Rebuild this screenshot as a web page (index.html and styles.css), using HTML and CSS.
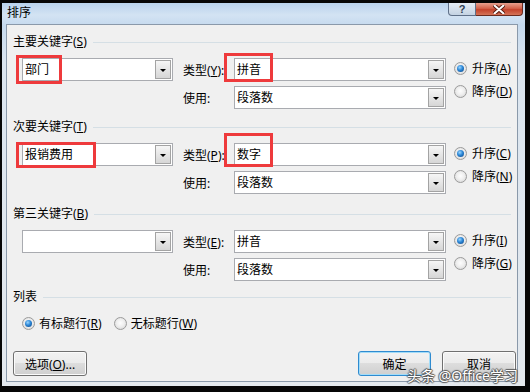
FILE: index.html
```html
<!DOCTYPE html>
<html lang="zh-CN">
<head>
    <meta charset="UTF-8">
    <meta name="viewport" content="width=device-width, initial-scale=1.0">
    <title>排序</title>
    <link rel="stylesheet" href="styles.css">
</head>
<body>
    <div class="window">
        <div class="titlebar">
            <span class="title">排序</span>
            <div class="caption">
                <span class="cap-btn help">?</span>
                <span class="cap-btn close">
                    <svg width="12" height="9" viewBox="0 0 12 9">
                        <path d="M1.5 0.5 L10.5 8.5 M10.5 0.5 L1.5 8.5" stroke="#5a1b10" stroke-width="4" stroke-linecap="round"/>
                        <path d="M1.5 0.5 L10.5 8.5 M10.5 0.5 L1.5 8.5" stroke="#fff" stroke-width="2" stroke-linecap="round"/>
                    </svg>
                </span>
            </div>
        </div>

        <div class="client">
            <!-- 主要关键字 -->
            <div class="group">
                <div class="group-head"><span>主要关键字(<u>S</u>)</span></div>
                <div class="group-body">
                    <div class="combo key">
                        <span class="value">部门</span><span class="drop"></span>
                        <span class="mark mark-1"></span>
                    </div>
                    <div class="fields">
                        <div class="field">
                            <label>类型(<u>Y</u>):</label>
                            <div class="combo wide">
                                <span class="value">拼音</span><span class="drop"></span>
                                <span class="mark mark-2"></span>
                            </div>
                        </div>
                        <div class="field">
                            <label>使用:</label>
                            <div class="combo wide"><span class="value">段落数</span><span class="drop"></span></div>
                        </div>
                    </div>
                    <div class="order">
                        <span class="radio on"><i></i>升序(<u>A</u>)</span>
                        <span class="radio"><i></i>降序(<u>D</u>)</span>
                    </div>
                </div>
            </div>

            <!-- 次要关键字 -->
            <div class="group">
                <div class="group-head"><span>次要关键字(<u>T</u>)</span></div>
                <div class="group-body">
                    <div class="combo key">
                        <span class="value">报销费用</span><span class="drop"></span>
                        <span class="mark mark-3"></span>
                    </div>
                    <div class="fields">
                        <div class="field">
                            <label>类型(<u>P</u>):</label>
                            <div class="combo wide">
                                <span class="value">数字</span><span class="drop"></span>
                                <span class="mark mark-4"></span>
                            </div>
                        </div>
                        <div class="field">
                            <label>使用:</label>
                            <div class="combo wide"><span class="value">段落数</span><span class="drop"></span></div>
                        </div>
                    </div>
                    <div class="order">
                        <span class="radio on"><i></i>升序(<u>C</u>)</span>
                        <span class="radio"><i></i>降序(<u>N</u>)</span>
                    </div>
                </div>
            </div>

            <!-- 第三关键字 -->
            <div class="group third">
                <div class="group-head"><span>第三关键字(<u>B</u>)</span></div>
                <div class="group-body">
                    <div class="combo key"><span class="value"></span><span class="drop"></span></div>
                    <div class="fields">
                        <div class="field">
                            <label>类型(<u>E</u>):</label>
                            <div class="combo wide"><span class="value">拼音</span><span class="drop"></span></div>
                        </div>
                        <div class="field">
                            <label>使用:</label>
                            <div class="combo wide"><span class="value">段落数</span><span class="drop"></span></div>
                        </div>
                    </div>
                    <div class="order">
                        <span class="radio on"><i></i>升序(<u>I</u>)</span>
                        <span class="radio"><i></i>降序(<u>G</u>)</span>
                    </div>
                </div>
            </div>

            <!-- 列表 -->
            <div class="group list">
                <div class="group-head"><span>列表</span></div>
                <div class="list-body">
                    <span class="radio on"><i></i>有标题行(<u>R</u>)</span>
                    <span class="radio"><i></i>无标题行(<u>W</u>)</span>
                </div>
            </div>

            <div class="buttons">
                <button class="btn">选项(<u>O</u>)...</button>
                <button class="btn ok">确定</button>
                <button class="btn cancel">取消</button>
            </div>
        </div>

        <span class="watermark">头条 @Office学习</span>
    </div>
</body>
</html>
```

FILE: styles.css
```css
* { margin: 0; padding: 0; box-sizing: border-box; }

body {
    width: 530px;
    height: 392px;
    padding: 3px 5px 6px 2px;
    background: #060606;
    font-family: "Noto Sans", "Noto Sans CJK SC", sans-serif;
    font-size: 12px;
    color: #000;
}

.window {
    position: relative;
    height: 383px;
    display: flex;
    flex-direction: column;
    background: linear-gradient(180deg, #b9d2ec 0, #d3e3f3 12px, #c6daee 22px, #dbe5ef 60px, #e4e9ee 100%);
}

/* title bar */
.titlebar {
    height: 21px;
    display: flex;
    align-items: flex-start;
    padding-left: 5px;
}

.title { line-height: 20px; }

.caption {
    margin-left: auto;
    margin-right: 2px;
    display: flex;
}

.cap-btn {
    height: 13px;
    display: flex;
    align-items: center;
    justify-content: center;
}

.help {
    width: 28px;
    border: 1px solid #5f7088;
    border-top: none;
    border-radius: 0 0 0 4px;
    background: linear-gradient(#e6edf5, #c4d3e3);
    color: #2e3d52;
    font-family: "Liberation Sans", sans-serif;
    font-weight: bold;
    font-size: 11px;
    line-height: 12px;
}

.close {
    width: 47px;
    border: 1px solid #6a2b1f;
    border-top: none;
    border-left: none;
    border-radius: 0 0 4px 0;
    background: linear-gradient(#e6a08e 0, #d2614a 45%, #c4432c 55%, #d47458 100%);
}

/* client area */
.client {
    flex: 1;
    margin: 0 7px 4px 4px;
    padding-top: 9px;
    border: 1px solid #8a99aa;
    background: #f0f0f0;
    display: flex;
    flex-direction: column;
}

.group + .group { margin-top: 10px; }
.group.third { margin-top: 12px; }
.group.list { margin-top: 8px; }

.group-head {
    display: flex;
    align-items: center;
    height: 16px;
    line-height: 16px;
    padding: 0 6px;
}

.group-head::after {
    content: "";
    flex: 1;
    margin-left: 6px;
    border-top: 1px solid #d5dfe5;
}

.group-body {
    display: flex;
    align-items: flex-start;
    margin-top: 8px;
    padding-left: 15px;
}

/* combo box */
.combo {
    position: relative;
    display: flex;
    height: 23px;
    padding: 1px;
    border: 1px solid #a9abb0;
    background: #fff;
}

.combo.key { width: 151px; }
.combo.wide { width: 212px; }

.value {
    flex: 1;
    padding-left: 1px;
    line-height: 19px;
}

.drop {
    width: 16px;
    border: 1px solid #a3a3a3;
    background: linear-gradient(#f6f6f6, #d6d6d6);
    display: flex;
    align-items: center;
    justify-content: center;
}

.drop::after {
    content: "";
    margin-top: 1px;
    border-top: 3px solid #000;
    border-left: 3px solid transparent;
    border-right: 3px solid transparent;
}

/* red highlight marks */
.mark {
    position: absolute;
    border: 3px solid #ee3a3c;
}

.mark-1 { left: -7px; top: -4px; width: 46px; height: 29px; }
.mark-2 { left: -11px; top: -6px; width: 49px; height: 29px; }
.mark-3 { left: -7px; top: -2px; width: 80px; height: 26px; }
.mark-4 { left: -11px; top: -11px; width: 49px; height: 34px; }

.fields {
    margin-left: 10px;
    display: flex;
    flex-direction: column;
    gap: 5px;
}

.field {
    display: flex;
    align-items: center;
}

.field label { width: 51px; }

/* radios */
.order {
    margin-left: 8px;
    display: flex;
    flex-direction: column;
    gap: 3px;
}

.radio {
    display: flex;
    align-items: center;
    height: 20px;
}

.radio i {
    width: 13px;
    height: 13px;
    margin-right: 5px;
    border: 1px solid #9b9b9b;
    border-radius: 50%;
    background: radial-gradient(circle at 50% 45%, #fdfdfd 0, #efefef 45%, #cfcfcf 100%);
    display: grid;
    place-items: center;
}

.radio.on i::after {
    content: "";
    width: 7px;
    height: 7px;
    border-radius: 50%;
    background: radial-gradient(circle at 40% 35%, #9ad6ff 0, #2b86d6 45%, #0a3f7c 100%);
}

.list-body {
    display: flex;
    align-items: center;
    gap: 12px;
    height: 16px;
    margin-top: 10px;
    padding-left: 15px;
}

.list-body .radio i { margin-right: 4px; }

/* buttons */
.buttons {
    display: flex;
    margin-top: 20px;
    padding: 0 1px 0 6px;
}

.btn {
    width: 74px;
    height: 25px;
    border: 1px solid #707070;
    border-radius: 3px;
    background: linear-gradient(#f2f2f2 0, #ebebeb 50%, #dddddd 50%, #cfcfcf 100%);
    box-shadow: inset 0 0 0 1px #fbfbfb;
    font: inherit;
    color: #000;
}

.btn.ok {
    width: 73px;
    margin-left: auto;
    border-color: #2f8bd0;
    box-shadow: inset 0 0 0 1px #a3dcf8;
}

.btn.cancel { margin-left: 11px; }

.watermark {
    position: absolute;
    right: 7px;
    bottom: 1px;
    font-size: 14px;
    line-height: 18px;
    color: #fff;
    text-shadow: 1px 0 1px #555, -1px 0 1px #555, 0 1px 1px #555, 0 -1px 1px #555;
}
```
